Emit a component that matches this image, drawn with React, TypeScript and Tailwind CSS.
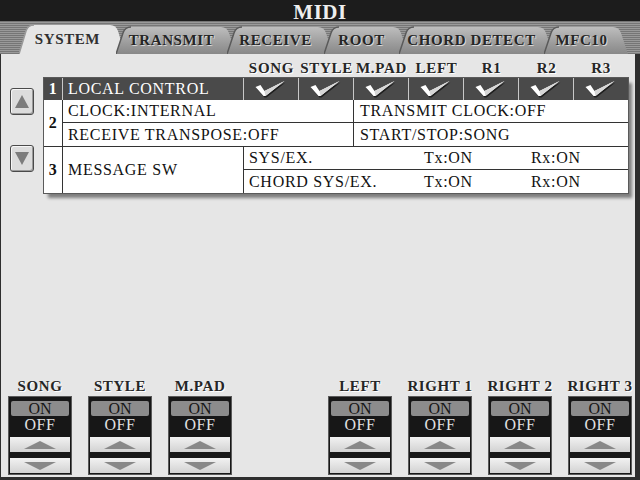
import React from "react";

type TabDef = { label: string; w: string; W: number; active?: boolean; first?: boolean };

const TABS: TabDef[] = [
  { label: "SYSTEM", w: "w-[106px]", W: 106, active: true, first: true },
  { label: "TRANSMIT", w: "w-[120px]", W: 120 },
  { label: "RECEIVE", w: "w-[106px]", W: 106 },
  { label: "ROOT", w: "w-[84px]", W: 84 },
  { label: "CHORD DETECT", w: "w-[154px]", W: 154 },
  { label: "MFC10", w: "w-[84px]", W: 84 },
];

function Tab({ t, i }: { t: TabDef; i: number }) {
  const H = 29;
  const top = t.active ? 0 : 2;
  const W = t.W;
  const d = `M0,${H} L7,${top + 6} Q9,${top} 15,${top} L${W - 15},${top} Q${W - 9},${top} ${W - 7},${top + 6} L${W},${H} Z`;
  const edge = `M0,${H} L7,${top + 6} Q9,${top} 15,${top}`;
  return (
    <div className={`relative shrink-0 h-[29px] ${t.w} ${t.first ? "" : "-ml-[9px]"}`}>
      <svg className="absolute inset-0" width={W} height={H} viewBox={`0 0 ${W} ${H}`}>
        <defs>
          <linearGradient id={`tabg${i}`} x1="0" y1="0" x2="0" y2="1">
            <stop offset="0" stopColor="#bebebe" />
            <stop offset="0.6" stopColor="#9c9c9c" />
            <stop offset="1" stopColor="#888888" />
          </linearGradient>
        </defs>
        <path d={d} fill={t.active ? "#e6e6e6" : `url(#tabg${i})`} />
        <path d={edge} fill="none" stroke={t.active ? "#9a9a9a" : "#5a5a5a"} strokeWidth="1.5" />
      </svg>
      <div
        className={`relative h-full flex items-center justify-center pr-[9px] font-bold text-[15px] tracking-[0.6px] leading-none ${
          t.active ? "text-[#303030]" : "pt-[2px] text-[#262626] [text-shadow:1px_1px_0_#d8d8d8]"
        }`}
      >
        {t.label}
      </div>
    </div>
  );
}

function Check() {
  return (
    <svg width="32" height="17" viewBox="0 0 31 17">
      <path d="M1,7.5 L6,5.5 L10,11.5 L30,1.5 L11,16.5 L9,16.5 Z" fill="#1e1e1e" />
      <path d="M0,6 L5,4 L9,10 L29,0 L10,15 L8,15 Z" fill="#ffffff" />
      <path d="M9,10 L29,0 L10,15 Z" fill="#d6d6d6" />
    </svg>
  );
}

function SideArrow({ up }: { up?: boolean }) {
  return (
    <div className="w-[24px] h-[27px] rounded-[3px] border border-[#4a4a4a] bg-[#dcdcdc] shadow-[inset_1px_1px_0_#f6f6f6,inset_-1px_-1px_0_#9a9a9a] flex items-center justify-center">
      <svg width="14" height="13" viewBox="0 0 14 13">
        {up ? <path d="M7,0 L14,13 L0,13 Z" fill="#7c7c7c" /> : <path d="M0,0 L14,0 L7,13 Z" fill="#7c7c7c" />}
      </svg>
    </div>
  );
}

function StepBtn({ up }: { up?: boolean }) {
  return (
    <div className="h-[15px] bg-[linear-gradient(to_bottom,#f2f2f2,#d2d2d2)] flex items-center justify-center">
      <svg width="32" height="8" viewBox="0 0 32 8">
        {up ? <path d="M16,0 L32,8 L0,8 Z" fill="#888888" /> : <path d="M0,0 L32,0 L16,8 Z" fill="#888888" />}
      </svg>
    </div>
  );
}

function Control({ label }: { label: string }) {
  return (
    <div className="w-[64px] shrink-0 flex flex-col items-center">
      <div className="h-[16px] flex items-center justify-center whitespace-nowrap font-bold text-[15px] leading-none tracking-[0.6px] text-[#262626] [text-shadow:1px_1px_0_#ffffff]">
        {label}
      </div>
      <div className="mt-[2px] w-[64px] h-[79px] bg-[#171717] border border-[#5a5a5a] flex flex-col px-[1px]">
        <div className="mt-[4px] mx-[1px] h-[15px] rounded-[2px] bg-[#8c8c8c] flex items-center justify-center text-[16px] leading-none text-[#161616]">
          ON
        </div>
        <div className="h-[18px] flex items-center justify-center text-[16px] leading-none tracking-[0.5px] text-[#e2e2e2]">OFF</div>
        <div className="mt-[3px]">
          <StepBtn up />
        </div>
        <div className="mt-[6px]">
          <StepBtn />
        </div>
      </div>
    </div>
  );
}

const HEAD = ["SONG", "STYLE", "M.PAD", "LEFT", "R1", "R2", "R3"];
const GRID = "grid grid-cols-[19px_181px_55px_55px_55px_55px_55px_55px_54px]";

export default function App() {
  return (
    <div className="w-[640px] h-[480px] bg-[#2e2e2e] flex flex-col overflow-hidden font-['Liberation_Serif',serif]">
      <div className="h-[21px] shrink-0 bg-[#1c1c1c] flex items-center justify-center pt-[2px] text-[#eeeeee] font-bold text-[21px] leading-[18px] tracking-[0.5px]">
        MIDI
      </div>
      <div className="h-[33px] shrink-0 flex items-end pl-[19px] bg-[repeating-linear-gradient(to_bottom,#767676_0px,#767676_1px,#9a9a9a_1px,#9a9a9a_2px)]">
        {TABS.map((t, i) => (
          <Tab key={t.label} t={t} i={i} />
        ))}
      </div>
      <div className="h-[423px] w-[634px] ml-[1px] shrink-0 bg-[#e6e6e6] flex flex-col text-[#111111]">
        <div className="flex pt-[5px]">
          <div className="w-[43px] shrink-0 pl-[9px] pt-[29px] flex flex-col">
            <SideArrow up />
            <div className="mt-[30px]">
              <SideArrow />
            </div>
          </div>
          <div className="w-[584px] flex flex-col">
            <div className={`${GRID} h-[18px]`}>
              <div />
              <div />
              {HEAD.map((h) => (
                <div
                  key={h}
                  className="flex items-center justify-center font-bold text-[15px] leading-none tracking-[0.7px] text-[#262626] [text-shadow:1px_1px_0_#ffffff]"
                >
                  {h}
                </div>
              ))}
            </div>
            <div
              className={`${GRID} mt-[1px] grid-rows-[22px_23px_24px_23px_23px] bg-white ring-1 ring-[#5a5a5a] shadow-[4px_5px_3px_rgba(0,0,0,0.45)] text-[16px] leading-none tracking-[0.7px]`}
            >
              <div className="col-start-1 row-start-1 bg-[#4a4a4a] border-r border-[#c8c8c8] text-white font-bold flex items-center justify-center">
                1
              </div>
              <div className="col-start-2 row-start-1 bg-[#4a4a4a] border-r border-[#c8c8c8] text-white flex items-center pl-[5px]">
                LOCAL CONTROL
              </div>
              {HEAD.map((h, i) => (
                <div
                  key={h}
                  className={`row-start-1 bg-[#4a4a4a] flex items-center justify-center ${
                    i < HEAD.length - 1 ? "border-r border-[#c8c8c8]" : ""
                  }`}
                >
                  <Check />
                </div>
              ))}
              <div className="col-start-1 row-start-2 row-span-2 border-r border-b border-[#333333] font-bold flex items-center justify-center">
                2
              </div>
              <div className="col-start-2 col-span-3 row-start-2 border-r border-b border-[#333333] flex items-center pl-[5px]">
                CLOCK:INTERNAL
              </div>
              <div className="col-start-5 col-span-5 row-start-2 border-b border-[#333333] flex items-center pl-[6px]">
                TRANSMIT CLOCK:OFF
              </div>
              <div className="col-start-2 col-span-3 row-start-3 border-r border-b border-[#333333] flex items-center pl-[5px]">
                RECEIVE TRANSPOSE:OFF
              </div>
              <div className="col-start-5 col-span-5 row-start-3 border-b border-[#333333] flex items-center pl-[6px]">
                START/STOP:SONG
              </div>
              <div className="col-start-1 row-start-4 row-span-2 border-r border-[#333333] font-bold flex items-center justify-center">
                3
              </div>
              <div className="col-start-2 row-start-4 row-span-2 border-r border-[#333333] flex items-center pl-[5px]">
                MESSAGE SW
              </div>
              <div className="col-start-3 col-span-7 row-start-4 border-b border-[#333333] flex items-center pl-[5px]">
                <span className="w-[175px]">SYS/EX.</span>
                <span className="w-[107px]">Tx:ON</span>
                <span>Rx:ON</span>
              </div>
              <div className="col-start-3 col-span-7 row-start-5 flex items-center pl-[5px]">
                <span className="w-[175px]">CHORD SYS/EX.</span>
                <span className="w-[107px]">Tx:ON</span>
                <span>Rx:ON</span>
              </div>
            </div>
          </div>
        </div>
        <div className="flex-1" />
        <div className="flex gap-[16px] pl-[7px] pb-[2px]">
          <Control label="SONG" />
          <Control label="STYLE" />
          <Control label="M.PAD" />
          <div className="w-[64px] shrink-0" />
          <Control label="LEFT" />
          <Control label="RIGHT 1" />
          <Control label="RIGHT 2" />
          <Control label="RIGHT 3" />
        </div>
      </div>
    </div>
  );
}
